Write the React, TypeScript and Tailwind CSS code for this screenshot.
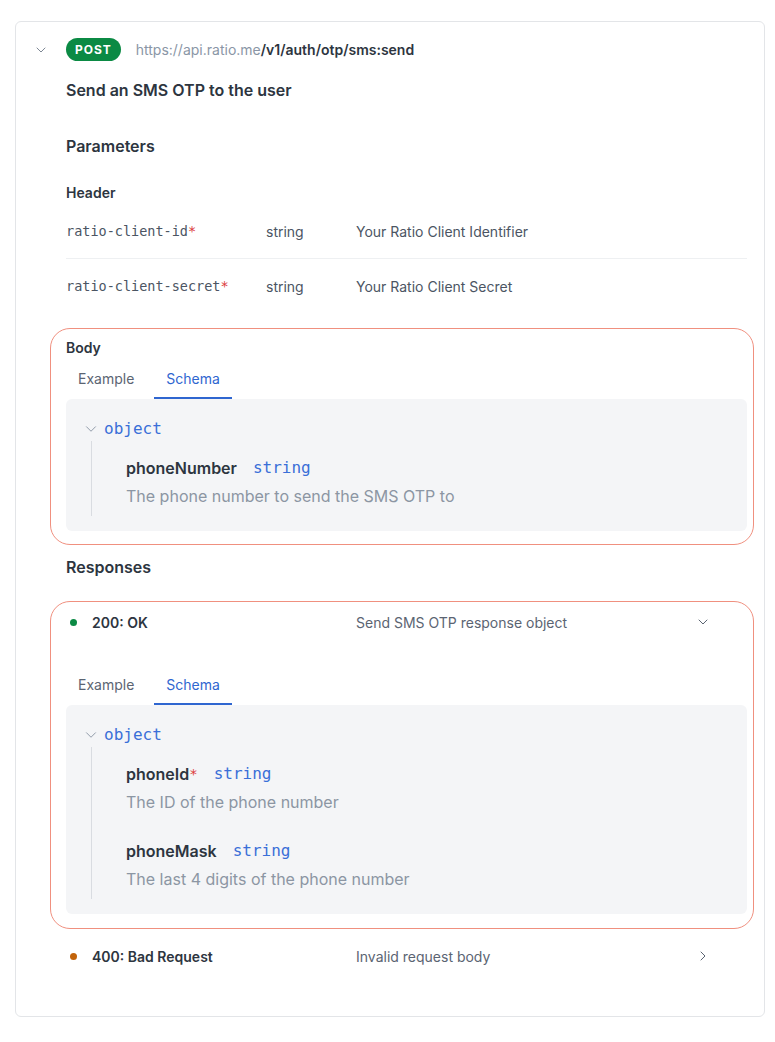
import React from 'react';
import { ChevronDownIcon, ChevronRightIcon } from 'lucide-react';

const mono = "font-['DejaVu_Sans_Mono','Liberation_Mono',monospace]";

type Prop = { name: string; required?: boolean; type: string; description: string };

function Tabs() {
  return (
    <div className="flex gap-2 text-[14px]">
      <div className="flex h-[42px] items-center px-3 text-[#5b6472]">Example</div>
      <div className="flex h-[42px] items-center border-b-2 border-[#2f66d0] px-3 pt-[2px] text-[#2f66d0]">
        Schema
      </div>
    </div>
  );
}

function SchemaPanel({ props }: { props: Prop[] }) {
  return (
    <div className="rounded-md bg-[#f4f5f7] pb-[15px] pl-[16px] pt-[18px]">
      <div className="flex h-[24px] items-center">
        <ChevronDownIcon className="h-[18px] w-[18px] text-[#8a94a3]" strokeWidth={1.25} />
        <span className={`${mono} ml-[4px] text-[16px] text-[#3a6fd8]`}>object</span>
      </div>
      <div className="ml-[9px] flex flex-col gap-[25px] border-l border-[#d9dce1] pb-[8px] pl-[34px] pt-[15px]">
        {props.map((p) =>
        <div key={p.name}>
            <div className="flex h-[24px] items-center">
              <span className="text-[16px] font-semibold text-[#2d3540]">{p.name}</span>
              {p.required && <span className={`${mono} text-[14px] text-[#dc3b3b]`}>*</span>}
              <span className={`${mono} ml-[16px] text-[16px] text-[#3a6fd8]`}>{p.type}</span>
            </div>
            <div className="mt-[4px] text-[16px] leading-[24px] text-[#8c96a3]">{p.description}</div>
          </div>
        )}
      </div>
    </div>
  );
}

function ResponseRow({ code, dot, description, open }: { code: string; dot: string; description: string; open?: boolean }) {
  return (
    <div className="flex h-[40px] items-center">
      <div className="flex w-[290px] items-center">
        <span className={`ml-[4px] h-[7px] w-[7px] rounded-full ${dot}`} />
        <span className="ml-[15px] text-[14px] font-semibold text-[#2d3540]">{code}</span>
      </div>
      <div className="flex-1 text-[14px] text-[#5b6472]">{description}</div>
      {open ?
      <ChevronDownIcon className="mr-[36px] h-[16px] w-[16px] text-[#5b6472]" strokeWidth={1.5} /> :
      <ChevronRightIcon className="mr-[36px] h-[16px] w-[16px] text-[#5b6472]" strokeWidth={1.5} />
      }
    </div>
  );
}

const headers = [
{ name: 'ratio-client-id', type: 'string', description: 'Your Ratio Client Identifier' },
{ name: 'ratio-client-secret', type: 'string', description: 'Your Ratio Client Secret' }];


export default function App() {
  return (
    <div className="min-h-[1042px] bg-white pl-[15px] pt-[21px] font-['Inter',sans-serif]">
      <div className="h-[996px] w-[750px] rounded-md border border-[#e3e5e8] pb-[38px] pl-[17px] pr-[17px] pt-[16px]">
        <div className="flex h-[23px] items-center">
          <div className="w-[33px]">
            <ChevronDownIcon className="h-[16px] w-[16px] text-[#7d8794]" strokeWidth={1.5} />
          </div>
          <span className="rounded-full bg-[#0b8a44] px-[9px] py-[4px] text-[12px] font-bold leading-[15px] tracking-[0.08em] text-white">
            POST
          </span>
          <span className="ml-[15px] text-[14px]">
            <span className="text-[#8a96a6]">https://api.ratio.me</span>
            <span className="font-semibold text-[#2d3540]">/v1/auth/otp/sms:send</span>
          </span>
        </div>

        <div className="ml-[33px]">
          <h1 className="mt-[17px] text-[16px] font-semibold leading-[24px] text-[#2d3540]">
            Send an SMS OTP to the user
          </h1>

          <h2 className="mt-[32px] text-[16px] font-semibold leading-[24px] text-[#2d3540]">Parameters</h2>
          <h3 className="mt-[25px] text-[14px] font-semibold leading-[20px] text-[#2d3540]">Header</h3>
          <div className="mt-[1px]">
            {headers.map((h, i) =>
            <div
              key={h.name}
              className={`flex h-[55px] items-center text-[14px] text-[#4b5563] ${i === 0 ? 'border-b border-[#eef0f2]' : ''}`}>
              
                <div className={`${mono} w-[200px] text-[13.5px]`}>
                  {h.name}
                  <span className="text-[#dc3b3b]">*</span>
                </div>
                <div className="w-[90px]">{h.type}</div>
                <div>{h.description}</div>
              </div>
            )}
          </div>

          <div className="-ml-[16px] -mr-[7px] mt-[14px] rounded-[20px] border-[1.5px] border-[#f0907f] pb-[13px] pl-[15px] pr-[6px] pt-[10px]">
            <div className="text-[14px] font-semibold leading-[18px] text-[#2d3540]">Body</div>
            <Tabs />
            <SchemaPanel
              props={[{ name: 'phoneNumber', type: 'string', description: 'The phone number to send the SMS OTP to' }]} />
            
          </div>

          <h2 className="mt-[10px] text-[16px] font-semibold leading-[24px] text-[#2d3540]">Responses</h2>

          <div className="-ml-[16px] -mr-[7px] mt-[22px] rounded-[20px] border-[1.5px] border-[#f0907f] pb-[14px] pl-[15px] pr-[6px]">
            <ResponseRow code="200: OK" dot="bg-[#0b8a44]" description="Send SMS OTP response object" open />
            <div className="mt-[21px]">
              <Tabs />
            </div>
            <SchemaPanel
              props={[
              { name: 'phoneId', required: true, type: 'string', description: 'The ID of the phone number' },
              { name: 'phoneMask', type: 'string', description: 'The last 4 digits of the phone number' }]
              } />
            
          </div>

          <div className="mt-[7px]">
            <ResponseRow code="400: Bad Request" dot="bg-[#c2630a]" description="Invalid request body" />
          </div>
        </div>
      </div>
    </div>);

}
